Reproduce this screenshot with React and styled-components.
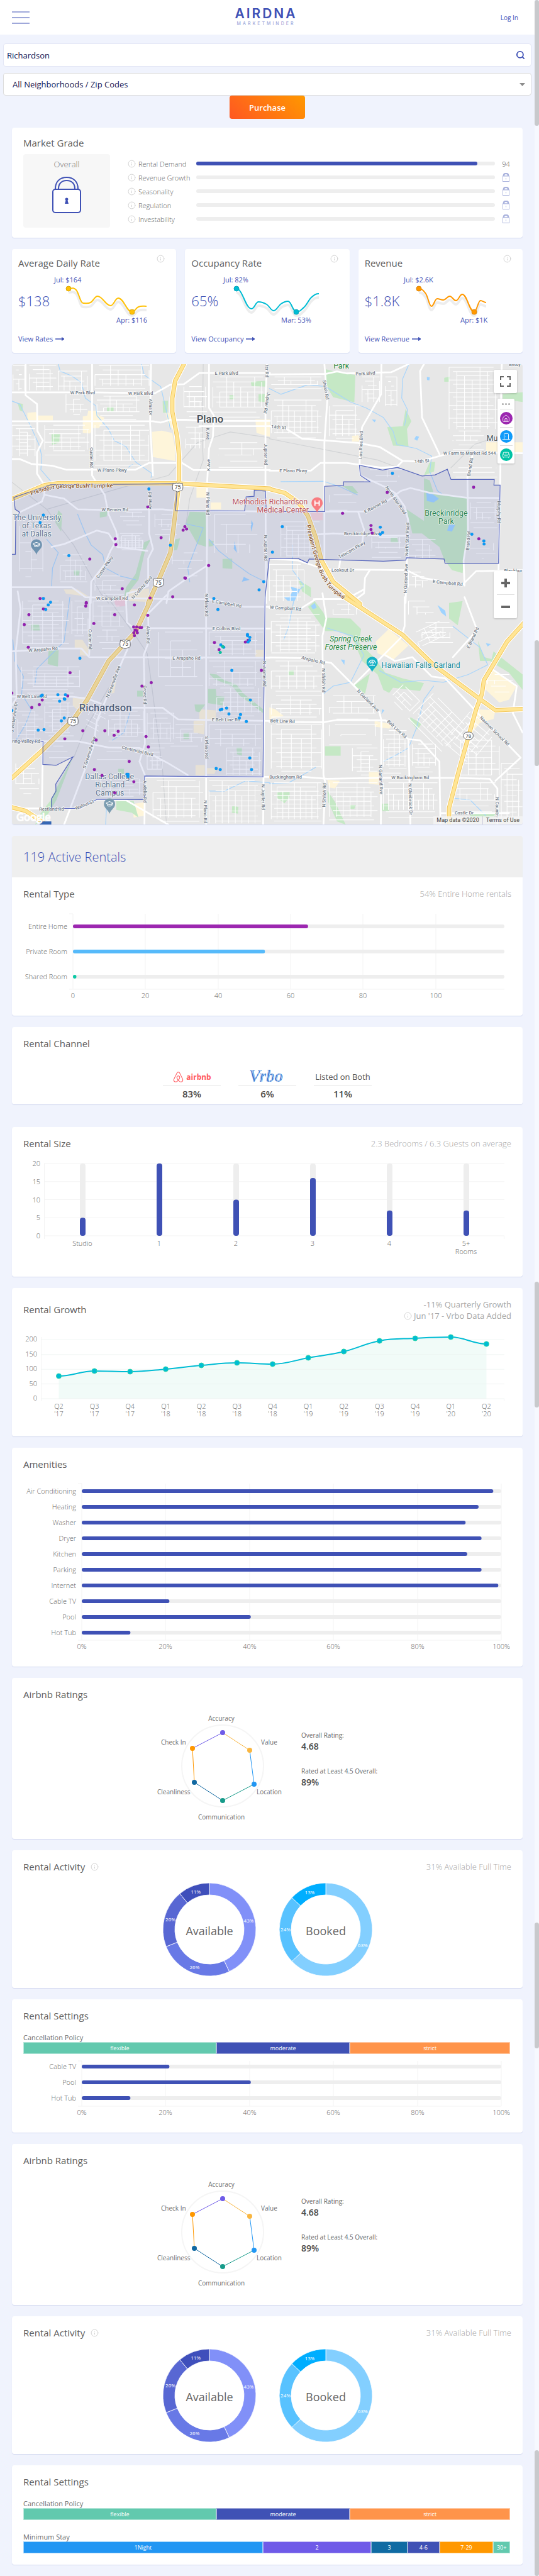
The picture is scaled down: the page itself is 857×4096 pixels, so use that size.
import React from "react";
import styled, { createGlobalStyle } from "styled-components";
import { Info, Search, House, DoorClosed, Sofa, GraduationCap, Plus, Minus } from "lucide-react";
import { FaAirbnb } from "react-icons/fa";

const indigo = "#3f51b5";
const track = "#eeeeee";
const gridLine = "#f3f3f3";

const GlobalStyle = createGlobalStyle`
  * { box-sizing: border-box; }
  body { margin: 0; background: #f0f3fd; font-family: "Open Sans", "Noto Sans", sans-serif; color: #555; }
  button, input, select { font-family: inherit; }
  h1, h2, p, dl, dd, dt { margin: 0; font-weight: 400; }
  svg { display: block; }
`;

const Page = styled.div`display: flex; align-items: stretch;`;
const Main = styled.div`flex: 1; min-width: 0; display: flex; flex-direction: column;`;
const Rail = styled.div`width: 7px; flex: none; display: flex; flex-direction: column; background: #f6f8fe;`;
const Thumb = styled.div`flex: 200 0 0; background: #c8c9cc; border-radius: 4px;`;
const RailGap = styled.div`flex: ${(p) => p.$grow} 0 0;`;

const TopBar = styled.header`
  height: 55px; background: #fff; padding: 0 26px 0 19px;
  display: grid; grid-template-columns: 1fr auto 1fr; align-items: center;
`;
const MenuButton = styled.button`
  width: 28px; height: 20px; padding: 0; border: 0; background: none;
  display: flex; flex-direction: column; justify-content: space-between;
  span { height: 2px; background: #9fa8da; }
`;
const Brand = styled.a`
  display: flex; flex-direction: column; align-items: center; text-decoration: none; font-family: Inter, sans-serif;
  strong { font-size: 21px; line-height: 20px; font-weight: 600; letter-spacing: 3px; color: ${indigo}; margin-right: -3px; }
  small { font-size: 7px; line-height: 11px; font-weight: 500; letter-spacing: 3px; color: #9fa8da; margin-right: -3px; }
`;
const LoginLink = styled.a`justify-self: end; font-size: 10px; font-weight: 400; color: ${indigo}; text-decoration: none;`;

const Filters = styled.form`padding: 14px 5px 0; display: flex; flex-direction: column; align-items: center;`;
const Field = styled.div`
  width: 100%; height: ${(p) => p.$h}px; margin-bottom: ${(p) => p.$gap}px; padding-right: 9px;
  display: flex; align-items: center; background: #fff; border: 1px solid ${(p) => p.$line}; border-radius: 4px;
  input, select {
    flex: 1; min-width: 0; height: 100%; border: 0; outline: 0; background: none; appearance: none;
    font-size: 13px; font-weight: 500; color: #13124f;
  }
  input { padding: 0 5px; }
  select { padding: 0 14px; }
`;
const IconButton = styled.button`border: 0; padding: 0; background: none; color: ${indigo}; display: flex;`;
const Purchase = styled.button`
  width: 120px; height: 37px; border: 0; border-radius: 4px; color: #fff; font-size: 13px; font-weight: 600;
  background: linear-gradient(45deg, #ff5722, #ff9800);
`;

const Content = styled.main`padding: 14px 19px 18px; display: flex; flex-direction: column; gap: 18px;`;
const Card = styled.section`
  background: #fff; border-radius: 4px; box-shadow: 0 1px 1px #d3d9f0;
  padding: ${(p) => p.$top ?? 15}px 18px ${(p) => p.$bottom ?? 0}px;
  margin-top: ${(p) => p.$apart ?? 0}px;
`;
const Head = styled.div`
  display: flex; justify-content: space-between; min-height: 22px;
  h2 { font-size: 15px; line-height: 22px; color: #5c5c5c; display: flex; align-items: center; gap: 9px; }
`;
const Note = styled.div`
  font-size: 13px; font-weight: 300; line-height: 18px; padding-top: 2px; color: #a6a6a6; text-align: right;
  p { display: flex; justify-content: flex-end; align-items: center; gap: 3px; }
`;
const InfoMark = styled(Info).attrs({ size: 13, strokeWidth: 1.5 })`color: #c6c6c6; flex: none;`;

const GradeBody = styled.div`display: flex; gap: 28px; margin-top: 7px;`;
const Overall = styled.div`
  width: 138px; height: 117px; flex: none; border-radius: 4px; background: #f7f7f7; padding-top: 7px;
  display: flex; flex-direction: column; align-items: center; gap: 11px;
  font-size: 13px; line-height: 18px; font-weight: 300; color: #777;
`;
const GradeList = styled.div`flex: 1; padding-top: 4px;`;
const GradeRow = styled.div`
  height: 22px; display: grid; grid-template-columns: 13px 88px 1fr 17px; column-gap: 4px; align-items: center;
  font-size: 11px; font-weight: 300; color: #666;
  > :last-child { justify-self: center; }
`;
const Bar = styled.div`
  height: 6px; border-radius: 3px; background: ${track}; margin-right: 5px;
  i { display: block; height: 6px; border-radius: 3px; background: ${indigo}; }
`;

const Stats = styled.div`display: grid; grid-template-columns: repeat(3, 1fr); gap: 14px;`;
const StatCard = styled.section`
  height: 165px; padding: 11px 10px; background: #fff; border-radius: 4px; box-shadow: 0 1px 1px #d3d9f0;
  h2 { font-size: 15px; line-height: 22px; color: #5c5c5c; }
`;
const StatTop = styled.div`display: flex; justify-content: space-between; align-items: flex-start; padding-right: 8px; svg { margin-top: -2px; }`;
const StatBody = styled.div`
  display: flex; height: 103px; padding-top: 7px;
  strong { width: 50px; flex: none; white-space: nowrap; font-size: 22px; line-height: 30px; padding-top: 27px; font-weight: 300; color: ${indigo}; }
  svg { flex: none; overflow: visible; }
  text { font-size: 11px; fill: ${indigo}; font-weight: 400; }
`;
const MoreLink = styled.a`display: flex; align-items: center; gap: 4px; font-size: 11px; line-height: 14px; color: ${indigo}; text-decoration: none;`;

const MapFrame = styled.section`position: relative; border-radius: 4px; overflow: hidden; box-shadow: 0 1px 1px #d3d9f0;`;
const MapArt = styled.svg`
  width: 100%; aspect-ratio: 812 / 732; font-family: Roboto, sans-serif;
  text { text-anchor: middle; dominant-baseline: central; paint-order: stroke; stroke: #ffffffcc; stroke-width: 5px; stroke-linejoin: round; }
`;
const MapPanel = styled.div`
  position: absolute; right: ${(p) => p.$right}px; top: ${(p) => p.$top}px; width: ${(p) => p.$w}px;
  background: #fff; border-radius: 2px; box-shadow: 0 1px 3px #0003;
  display: flex; flex-direction: column; align-items: center;
`;
const MapButton = styled.button`
  width: 37px; height: 37px; border: 0; padding: 0; background: none; color: #666;
  display: flex; align-items: center; justify-content: center;
`;
const Divider = styled.hr`width: ${(p) => p.$w}px; height: 1px; border: 0; margin: 0; background: #ddd;`;
const Dots = styled.div`height: 16px; display: flex; align-items: center; gap: 2px; i { width: 3px; height: 3px; border-radius: 50%; background: #aaa; }`;
const Kind = styled.button`
  width: 20px; height: 20px; margin: 4px 0; padding: 0; border: 0; border-radius: 50%; background: ${(p) => p.$color}; color: #fff;
  display: flex; align-items: center; justify-content: center;
`;
const Attribution = styled.div`
  position: absolute; right: 0; bottom: 0; height: 13px; padding: 0 5px; background: #f5f5f5cc;
  display: flex; align-items: center; gap: 5px; font: 9px/13px Roboto, sans-serif; color: #444;
  a { color: #444; text-decoration: none; border-left: 1px solid #ccd; padding-left: 5px; }
`;

const Banner = styled.div`
  margin: -15px -18px 15px; height: 66px; padding: 0 18px; background: #efefef; border-radius: 4px 4px 0 0;
  display: flex; align-items: center;
  h1 { font-size: 20px; font-weight: 300; color: ${indigo}; }
`;
const Chart = styled.svg`
  width: 100%; overflow: visible;
  text { font-size: 11px; font-weight: 300; fill: #666; }
`;

const Channels = styled.div`display: flex; justify-content: center; gap: 28px; padding-top: 28px;`;
const Channel = styled.div`
  width: 92px; text-align: center;
  strong { display: block; font-size: 15px; line-height: 25px; font-weight: 600; color: #4a4a4a; }
`;
const ChannelName = styled.div`
  height: 29px; border-bottom: 1px solid #e6e6e6; display: flex; align-items: center; justify-content: center; gap: 3px;
  font-size: ${(p) => (p.$brand ? 12 : 13)}px; font-weight: ${(p) => (p.$brand ? 700 : 400)}; color: ${(p) => (p.$brand ? "#ff5a5f" : "#555")};
  white-space: nowrap;
`;

const Centered = styled.div`display: flex; justify-content: center; gap: ${(p) => p.$gap}px; padding-top: ${(p) => p.$top ?? 0}px;`;
const Radar = styled.svg`text { font-size: 10px; fill: #6b6b6b; } line { stroke-width: 1px; }`;
const Scores = styled.dl`
  width: 122px; padding-top: 46px; white-space: nowrap;
  dt { font-size: 10px; line-height: 16px; color: #666; }
  dd { font-size: 14px; line-height: 20px; font-weight: 600; color: #4a4a4a; margin-bottom: 21px; }
`;
const Donut = styled.svg`
  text { text-anchor: middle; fill: #fff; font-size: 8px; }
  text:last-child { font-size: 18px; fill: #666; }
`;

const SettingLabel = styled.p`margin-top: ${(p) => p.$top}px; font-size: 11px; line-height: 15px; color: #6b6b6b;`;
const Segments = styled.div`display: flex; height: 19px; margin-right: 2px;`;
const Segment = styled.div`
  flex: ${(p) => p.$size} 0 0; min-width: 0; background: ${(p) => p.$color}; border: 1px solid #ffffff88; background-clip: border-box;
  font-size: 9px; line-height: 17px; color: #fff; text-align: center; white-space: nowrap;
`;

/* smooth curve with horizontal control handles */
const curve = (pts, t = 0.4) =>
  pts.map(([x, y], i) => {
    if (!i) return `M${x} ${y}`;
    const [a, b] = pts[i - 1];
    const p0 = pts[i - 2] || pts[i - 1];
    const p3 = pts[i + 1] || pts[i];
    const turnA = (b - p0[1]) * (y - b) <= 0;
    const turnB = (y - b) * (p3[1] - y) <= 0;
    const s1 = turnA ? 0 : (y - p0[1]) / (x - p0[0] || 1);
    const s2 = turnB ? 0 : (p3[1] - b) / (p3[0] - a || 1);
    const h = (x - a) * t;
    return `C${a + h} ${b + s1 * h} ${x - h} ${y - s2 * h} ${x} ${y}`;
  }).join("");

const Lock = ({ w, h, color, line, face }) => (
  <svg width={w} height={h} viewBox="0 0 46 58" fill="none" stroke={color} strokeWidth={line}>
    <path d="M5 21V19C5 8 12 1 23 1s18 7 18 18v2M10 21v-2C10 11 15 6 23 6s13 5 13 13v2" />
    <rect x="1" y="20" width="44" height="37" rx="4" fill={face} />
    <path d="M20.500 36a2.500 2.500 0 1 1 5 0l-1 2 1.500 5h-6l1.500-5z" fill={color} stroke="none" />
  </svg>
);

const grades = ["Rental Demand", "Revenue Growth", "Seasonality", "Regulation", "Investability"];

const stats = [
  { title: "Average Daily Rate", value: "$138", link: "View Rates", color: "#ffc107", edge: "#dba90c", hi: "Jul: $164", hx: 7, lo: "Apr: $116", lx: 106, low: 7,
    pts: [[30, 23], [42, 25], [53, 46], [65, 45], [76, 35], [97, 50], [109, 38], [131, 60], [141, 52], [154, 51]] },
  { title: "Occupancy Rate", value: "65%", link: "View Occupancy", color: "#00bcd4", edge: "#0aa5ba", hi: "Jul: 82%", hx: 1, lo: "Mar: 53%", lx: 93, low: 7,
    pts: [[22, 23], [46, 55], [57, 44], [70, 48], [81, 58], [93, 47], [104, 43], [117, 60], [130, 52], [141, 37], [153, 31]] },
  { title: "Revenue", value: "$1.8K", link: "View Revenue", color: "#ff9800", edge: "#dd860a", hi: "Jul: $2.6K", hx: 12, lo: "Apr: $1K", lx: 102, low: 8,
    pts: [[36, 23], [47, 31], [56, 51], [65, 39], [75, 41], [85, 35], [95, 42], [105, 32], [124, 60], [134, 42], [143, 45]] },
];

const Stat = ({ s }) => (
  <StatCard>
    <StatTop><h2>{s.title}</h2><InfoMark /></StatTop>
    <StatBody>
      <strong>{s.value}</strong>
      <svg width="165" height="84" viewBox="0 0 165 84">
        <path d={curve(s.pts)} fill="none" stroke="#000" strokeOpacity=".07" strokeWidth="4" transform="translate(0 6)" />
        <path d={curve(s.pts)} fill="none" stroke={s.color} strokeWidth="2" />
        {[s.pts[0], s.pts[s.low]].map(([x, y]) => <circle key={x} cx={x} cy={y} r="4" fill={s.color} stroke={s.edge} />)}
        <text x={s.hx} y="13">{s.hi}</text>
        <text x={s.lx} y="77">{s.lo}</text>
      </svg>
    </StatBody>
    <MoreLink href="#details">{s.link}
      <svg width="15" height="8" viewBox="0 0 15 8" fill="none" stroke={indigo}><path d="M0 4h13" strokeWidth="1.500" /><path d="M10.500 1.500 14 4l-3.500 2.500z" fill={indigo} /></svg>
    </MoreLink>
  </StatCard>
);

/* map data: each quadrant has its own origin */
const A = [-60, -24], B = [1332, -24], C = [-60, 1206], D = [1332, 1206];
const at = ([ox, oy], s) => s.trim().split(" ").map((p) => p.split(",").map(Number)).map(([x, y]) => [x + ox, y + oy]);
const line = (q, s) => at(q, s).map((p) => p.join(",")).join(" ");

const roads = [
  [A, "131,24 131,185 190,230 192,370 220,420 190,480 190,590 228,650 228,700 215,735 100,790"],
  [A, "60,170 480,170 800,175 880,130 950,128 1030,70 1395,70"], [A, "60,320 790,320 830,326 880,312 960,312 1080,318 1395,318"],
  [A, "1030,345 1395,345"], [A, "475,24 475,600 500,640 540,700 560,800 600,890 605,930 570,990 540,1060 470,1150 468,1260"],
  [A, "780,24 775,330 790,600"], [A, "770,690 770,900 790,980 765,1030 765,1170 700,1200 655,1210 650,1260"],
  [A, "60,515 100,515 160,540 270,550 340,570 700,570 770,535 940,535 1000,572 1395,572"],
  [A, "228,700 330,720 400,775 520,778 840,775 907,782 1395,787"], [A, "1080,24 1080,250 1105,290 1100,400 1080,460 1070,640 1068,1260"],
  [A, "1380,24 1372,200 1372,650 1375,1260"], [A, "60,1178 370,1178 440,1230 650,1235 870,1240 1080,1240 1150,1258"],
  [A, "265,970 330,955 500,885 560,900 605,970 760,990"], [A, "860,1260 870,1200 970,1130 1065,1070"],
  [B, "0,77 290,75 350,62 400,72 630,66 720,24"], [B, "285,24 300,210 285,430 285,1085"], [B, "580,24 578,180 480,350 470,430 467,547 471,600 600,660 650,690 700,760 718,830 712,1035 705,1260"],
  [B, "0,345 90,360 170,410 460,432 570,452 690,525 780,528 950,480 1310,485"], [B, "0,575 215,575 265,535 400,535 580,560 660,555 690,525"],
  [B, "800,24 780,60 790,300 880,490"], [B, "0,787 490,787 600,740 680,680 730,665 830,690 1020,715 1190,717"],
  [B, "1050,500 1025,600 1028,900 1005,1040 1010,1170"], [B, "1203,24 1200,100 1195,620 1186,1090"],
  [B, "255,905 330,900 580,912 725,912"], [B, "460,790 490,880 480,950 370,1010 360,1090"],
  [B, "0,1030 150,1040 285,1085 710,1090 790,1130 1000,1165 1070,1095 1310,1090"], [B, "520,1090 495,1130 490,1210 450,1240 230,1240"],
  [C, "90,-30 105,60 80,280 85,520 60,560"], [C, "60,280 150,275 240,265 420,265 460,310 1395,313"], [C, "60,515 370,515 450,525 520,550"],
  [C, "680,572 840,572 920,632 1395,640"], [C, "60,745 400,745 560,778 720,780 870,860 970,920"], [C, "650,0 655,130 690,160 1395,162"],
  [C, "860,-10 720,130 640,310 550,520 500,640 480,780 330,1177"], [C, "765,90 768,230 742,300 745,420 748,760 720,850 748,920 746,1177"],
  [C, "1065,0 1065,1177"], [C, "1370,0 1360,1177"], [C, "465,0 460,300"], [C, "870,1177 650,1050 500,1046 414,1093 60,1093"], [C, "221,745 215,1093"],
  [C, "1080,10 1260,50 1395,50"], [C, "750,930 1395,930"],
  [D, "275,-20 295,110 275,200 280,920 290,960 280,1177"], [D, "0,55 160,60 240,10 400,8 490,-40"], [D, "0,312 170,315 320,340 435,455 570,595 580,640 577,1177"],
  [D, "435,455 680,210 700,150 700,0"], [D, "0,645 280,647 350,635 600,637 720,735 780,740 880,850 885,1177"], [D, "720,735 730,1177"],
  [D, "0,930 180,930 300,940 560,935 970,935 1140,940 1180,990 1180,1177"], [D, "600,300 650,330 740,310 840,410 910,420 1060,580 1300,830 1170,950"],
  [D, "1010,0 1075,170 950,310"], [D, "1150,370 1280,460 1260,600 1310,700"], [D, "885,1117 1240,1117"],
];
const highways = [
  [A, "950,24 905,110 890,200 890,270 915,400 925,500 925,640 905,800 880,1000 820,1140 765,1260"],
  [C, "778,15 700,180 560,330 450,530 380,630 220,790 60,935"],
  [A, "60,722 230,650 300,640 900,640 1395,668"], [B, "0,670 80,690 150,740 200,810 240,920 270,1040 330,1150 470,1265"],
  [D, "390,0 690,195 850,350 1080,520 1170,585 1320,578"], [D, "1320,130 1230,230 1110,430 1100,500 1070,580 980,900 930,1090 930,1180"],
  [C, "50,1085 130,1105 240,1177"],
];
const parks = [
  [A, "265,385 308,383 305,430 268,442"], [A, "552,245 586,245 586,270 552,270"], [A, "840,215 868,213 865,275 842,275"], [A, "90,225 117,230 115,270 100,262"],
  [A, "1296,115 1370,110 1375,140 1300,138"], [A, "1336,180 1372,178 1372,220 1336,218"], [A, "1186,184 1210,184 1210,206 1186,206"],
  [A, "980,788 1062,790 1068,970 1020,955 960,850"], [A, "745,945 778,932 750,985 715,1140 640,1235 650,1180 700,1110"], [A, "1150,1032 1200,1030 1200,1083 1150,1080"],
  [A, "300,780 320,800 315,890 285,845"], [A, "515,790 555,785 550,812 515,818"], [A, "380,1088 411,1088 408,1117 384,1117"], [A, "905,930 930,925 915,985 892,990"], [A, "1078,936 1104,938 1100,965 1078,968"],
  [B, "290,50 350,65 445,80 440,222 400,212 330,195 290,130"], [B, "705,255 735,320 712,360 720,450 640,445 610,350 690,345"], [B, "905,95 935,88 930,115 905,115"],
  [B, "800,615 830,625 850,690 1025,712 1024,905 1005,1050 1000,1105 945,1090 905,1035 880,970 790,900 740,900 710,775 800,835"],
  [B, "830,530 858,530 852,580 800,600"], [B, "380,655 430,655 460,690 440,695"], [B, "1208,178 1311,170 1311,220 1208,205"], [B, "628,922 660,920 668,948 628,948"], [B, "150,1140 215,1180 215,1230 170,1200"],
  [C, "250,278 302,275 298,360 245,345"], [C, "160,140 200,138 205,172 162,172"], [C, "1075,475 1115,475 1118,512 1160,515 1150,560 1075,548"], [C, "708,484 738,484 738,514 708,514"],
  [C, "1080,395 1120,400 1160,430 1220,450 1260,500 1360,580 1360,600 1240,510 1200,460 1110,425"], [C, "948,702 976,700 976,734 948,734"], [C, "610,888 640,888 640,915 610,915"],
  [C, "1005,555 1060,555 1030,595 1010,590"], [C, "376,826 290,990 265,1045 200,1130 180,1177 230,1150 290,1050"], [C, "600,1055 690,1055 715,1140 680,1115 600,1100"], [C, "1222,778 1250,778 1250,820 1225,812"], [C, "1200,1080 1232,1085 1230,1120 1198,1115"],
  [D, "200,50 235,20 280,80 290,105 340,108 420,110 475,165 465,235 540,310 600,390 690,420 800,445 780,485 640,468 620,495 590,480 560,400 480,330 430,210 360,175 290,175"],
  [D, "440,455 520,395 495,500"], [D, "930,30 1000,20 975,145 930,110"], [D, "288,771 369,771 369,820 288,820"], [D, "97,380 126,378 126,402 97,402"], [D, "38,1010 105,1008 105,1036 78,1066 38,1036"],
  [D, "583,1068 620,1068 620,1106 583,1106"], [D, "730,620 788,655 765,685 728,636"], [D, "300,1000 340,1060 395,1177 350,1160 305,1060"], [D, "1080,225 1110,310 1150,320 1160,280 1311,400 1311,480 1240,390 1140,330 1090,330"], [D, "1040,1120 1170,1118 1170,1140 1040,1140"], [D, "418,1075 448,1075 440,1095 418,1095"],
];
const shops = [
  [A, "140,275 185,272 190,290 272,290 272,315 140,315"], [A, "455,265 500,265 510,290 538,300 535,320 510,355 480,355 465,383 427,380 427,295 450,290"],
  [A, "785,375 835,368 890,380 905,460 905,525 790,505"], [A, "855,275 885,275 900,370 870,340"], [A, "1320,310 1395,310 1395,400 1326,380"], [A, "1015,660 1066,660 1066,715 1015,715"], [A, "1088,740 1142,740 1142,775 1088,775"],
  [A, "665,1190 770,1185 770,1255 665,1250"], [A, "328,1190 400,1190 460,1228 340,1212"], [B, "1122,428 1311,428 1311,480 1122,480"], [B, "428,395 462,392 466,425 428,425"],
  [C, "385,220 425,220 455,265 455,305 412,300 412,262 385,262"], [C, "375,520 440,515 440,560 395,580 375,560"], [C, "1030,580 1115,585 1115,640 1060,640 1055,710 1000,700 1000,640 1030,635"], [C, "1010,868 1058,868 1058,920 1010,920"],
  [C, "1068,884 1120,884 1108,915 1068,915"], [C, "685,1070 748,1060 748,1130 690,1140"], [C, "1320,272 1365,272 1365,310 1320,310"], [C, "575,440 598,440 590,495 575,498"],
  [D, "550,230 618,165 720,250 640,325 560,290"], [D, "1140,370 1280,460 1240,530 1190,545 1110,470"], [D, "0,570 30,580 75,615 0,630"], [D, "545,640 645,660 620,680 545,670"], [D, "515,905 565,905 565,970 515,965"], [D, "300,945 365,950 340,990 310,985"], [D, "1070,580 1170,585 1160,630 1090,650 1040,710"],
];
const creeks = [
  [A, "300,24 310,60 370,85 420,120 440,200 495,240 500,290 560,360 590,420 650,450 700,530 785,590 780,610"], [A, "60,215 100,230 150,330 200,440 215,500 210,570 270,640"],
  [A, "730,24 745,80 830,140 865,290 880,360"], [A, "400,800 440,900 470,960 530,1010 545,1080 620,1120 700,1140"], [A, "265,1180 270,1080 300,1000 240,930"], [A, "1080,930 1130,990 1220,1060 1290,1110 1370,1150"], [A, "960,850 1050,870 1000,1000 970,1080 980,1150"],
  [B, "0,150 60,180 200,130 290,140 420,220 500,250 590,300 640,370 660,440 760,460 840,500 830,580 870,680 900,700"], [B, "720,30 690,100 685,200 715,260 700,340"], [B, "60,632 280,630 370,660 455,700"], [B, "120,960 120,1090 180,1170 120,1220"],
  [C, "65,220 75,330 120,410 110,500 160,580 130,660 75,750"], [C, "180,450 190,370 330,230 360,0"], [C, "670,600 640,700 580,740"], [C, "1080,1003 1160,1003 1270,950 1395,960"], [C, "550,1080 545,1177"],
  [D, "130,0 100,150 75,220"], [D, "280,500 330,460 420,440 460,360 490,300 430,200 300,160"], [D, "570,380 680,440 800,430 900,440 1030,400 1130,350 1090,260 950,150"], [D, "590,850 650,820 720,780 760,680 800,530 850,460"], [D, "955,1040 1040,1050 1120,1130"], [D, "0,965 100,960 190,910 240,880"],
];
const water = [
  [A, "690,540 660,562 670,548"], [A, "1300,830 1308,850 1300,890 1296,870"], [A, "1212,940 1225,1000 1208,980"], [A, "1260,1125 1290,1140 1250,1150"],
  [B, "815,90 830,92 828,108 816,106"], [B, "812,680 850,700 878,720 850,740 815,732"], [B, "760,395 775,400 765,420 750,412"], [B, "530,310 552,312 545,325"], [B, "930,855 962,855 945,890 920,885"], [B, "110,1175 160,1190 130,1250 100,1235 120,1200"],
  [D, "75,0 120,0 130,20 95,18"], [D, "215,45 235,30 245,55 225,62"], [D, "370,322 390,325 388,350"], [D, "1120,238 1146,242 1130,255"], [D, "585,580 595,585 580,605"], [D, "870,40 910,70 915,100 890,80"],
];
const rails = [
  [A, "60,635 240,775 380,960 520,1210 560,1260"], [A, "240,775 640,660 870,600 1020,430 1190,375 1395,405"], [A, "1050,24 1045,420 1050,520 980,720 960,860"], [B, "0,410 100,430 330,475 560,520 680,565"], [B, "940,560 1060,440 1150,410"],
  [C, "540,-20 700,200 760,290 780,430 840,900 860,1177"], [C, "560,470 440,680 380,830"],
];
const blocks = [
  [A, 66, 30, 60, 130, 30, 24], [A, 150, 30, 140, 130, 36, 22], [A, 300, 60, 150, 100, 30, 26], [A, 490, 30, 280, 130, 40, 24], [A, 500, 190, 220, 120, 34, 20], [A, 60, 340, 120, 160, 40, 18], [A, 230, 340, 230, 170, 44, 22], [A, 490, 340, 280, 210, 46, 26], [A, 340, 180, 110, 120, 38, 26], [A, 950, 140, 120, 160, 28, 26],
  [A, 1100, 90, 260, 210, 36, 26], [A, 960, 350, 100, 110, 24, 30], [A, 1130, 430, 230, 130, 60, 32], [A, 310, 1010, 140, 160, 26, 28], [A, 610, 900, 130, 90, 18, 12], [A, 800, 800, 130, 120, 34, 26], [A, 890, 1000, 160, 140, 60, 40], [A, 1110, 800, 220, 200, 60, 52], [A, 490, 1120, 150, 100, 40, 24], [A, 100, 860, 120, 280, 60, 44], [A, 620, 790, 130, 70, 32, 22],
  [B, 10, 90, 260, 60, 34, 20], [B, 10, 210, 260, 200, 30, 28], [B, 310, 240, 160, 180, 34, 24], [B, 480, 90, 90, 130, 30, 22], [B, 600, 90, 60, 150, 30, 24], [B, 930, 40, 250, 320, 40, 22], [B, 950, 370, 160, 100, 30, 24], [B, 310, 700, 140, 80, 46, 40], [B, 60, 840, 200, 180, 30, 22], [B, 530, 920, 170, 110, 36, 26], [B, 720, 930, 140, 100, 36, 28], [B, 1040, 740, 140, 140, 32, 26], [B, 1040, 950, 130, 90, 60, 26], [B, 0, 1060, 180, 190, 36, 28], [B, 720, 1100, 100, 80, 36, 22], [B, 950, 560, 230, 50, 28, 24], [B, 490, 570, 200, 70, 60, 30],
  [C, 115, 20, 240, 240, 52, 20], [C, 370, 20, 90, 200, 28, 30], [C, 480, 20, 160, 130, 46, 26], [C, 110, 360, 300, 140, 60, 17], [C, 230, 530, 150, 200, 40, 17], [C, 90, 590, 130, 140, 44, 20], [C, 820, 180, 230, 280, 62, 46], [C, 1080, 180, 280, 120, 60, 22], [C, 1080, 330, 270, 130, 40, 30], [C, 560, 590, 180, 170, 30, 22], [C, 760, 600, 140, 160, 34, 26], [C, 880, 660, 170, 110, 54, 22], [C, 1120, 470, 230, 150, 36, 24], [C, 1080, 660, 270, 110, 60, 24], [C, 1170, 780, 180, 140, 34, 22], [C, 760, 780, 90, 130, 26, 22], [C, 520, 940, 220, 100, 50, 18], [C, 500, 170, 130, 120, 26, 32], [C, 790, 950, 260, 220, 40, 30], [C, 1080, 950, 270, 220, 34, 26], [C, 230, 770, 140, 60, 44, 30], [C, 80, 860, 120, 160, 40, 26], [C, 500, 800, 180, 40, 50, 40],
  [D, 10, 90, 250, 210, 46, 18], [D, 10, 330, 260, 170, 44, 26], [D, 310, 510, 240, 120, 38, 30], [D, 10, 510, 260, 120, 50, 22], [D, 10, 660, 260, 250, 52, 24], [D, 310, 660, 250, 110, 60, 52], [D, 430, 780, 130, 140, 44, 20], [D, 590, 690, 120, 230, 28, 22], [D, 740, 760, 120, 160, 30, 24], [D, 590, 960, 280, 200, 26, 30], [D, 310, 960, 250, 200, 36, 24], [D, 10, 960, 260, 210, 30, 22], [D, 990, 740, 200, 180, 40, 30], [D, 950, 960, 220, 150, 36, 30], [D, 1200, 860, 110, 300, 30, 28], [D, 1130, 400, 130, 110, 36, 30], [D, 330, 10, 130, 80, 40, 26], [D, 790, 130, 160, 110, 36, 26], [D, 720, 20, 130, 70, 44, 30],
];
const tilted = [[D, 740, 560, 260, 200, 34, 26, 45], [D, 950, 620, 170, 220, 34, 30, 40], [D, 640, 480, 120, 100, 30, 24, 45], [C, 455, 560, 90, 120, 30, 24, 28], [D, 760, 150, 150, 100, 30, 26, -25]];
const grid = ([q, x, y, w, h, dx, dy]) => {
  let d = "";
  for (let j = 0; j * dy <= h; j++) {
    const a = ((j * 7 + x) % 3) * dx * 0.5, b = ((j * 5 + y) % 3) * dx * 0.5;
    d += `M${x + q[0] + a} ${y + q[1] + j * dy}H${x + q[0] + w - b}`;
  }
  for (let i = 0; i * dx <= w; i++) {
    const a = ((i * 5 + y) % 4) * dy, b = ((i * 3 + x) % 3) * dy;
    if (a + b < h) d += `M${x + q[0] + i * dx} ${y + q[1] + a}V${y + q[1] + h - b}`;
  }
  return d;
};
const boundary = [
  line(A, "60,1008 78,1008 80,822 100,790 77,775 70,714 260,648 640,645 917,643 907,782 1264,783 1272,711 1313,708 1314,676 1372,681 1376,787"),
  line(B, "286,787 286,656 384,652 384,633 520,632 471,600 466,547 586,572 663,558 790,603 858,597 921,568 940,621 1164,621 1162,650 1194,650 1186,1055 909,1054 904,1032 710,1026 706,1038 590,1044 206,1032 197,1052 150,1030 0,1028"),
  line(C, "1370,0 1359,930 747,925 746,1047 500,1046 414,1093 264,1093 264,1045 288,1004 287,967 376,826 289,870 220,865 221,745 60,745"),
].join(" ");
const labels = [
  [A, 426, 172, 0, "W Park Blvd"], [A, 726, 174, 0, "W Park Blvd"], [A, 1170, 71, 0, "E Park Blvd"], [A, 778, 247, 90, "Alma Dr"], [A, 473, 507, 90, "Custer Rd"], [A, 578, 573, 0, "W Plano Pkwy"], [A, 1075, 384, 90, "K Ave"], [A, 1077, 546, -90, "K Ave"], [A, 1373, 490, 90, "Jupiter Rd"], [A, 1380, 60, 90, "ter Rd"], [A, 1380, 225, 100, "Jupiter Rd"],
  [A, 593, 776, 0, "W Renner Rd"], [A, 774, 730, -90, "Alma Rd"], [A, 1073, 746, 90, "N Plano Rd"], [A, 540, 1075, -55, "Custer Pkwy"], [A, 732, 1180, -48, "N Collins Blvd"], [A, 1373, 975, 90, "N Jupiter Rd"], [A, 578, 1235, 0, "W Campbell Rd"],
  [B, 497, 72, -3, "Park Blvd"], [B, 292, 157, 80, "Shiloh Rd"], [B, 48, 350, 4, "14th St"], [B, 474, 442, -88, "Los Rios Blvd"], [B, 789, 526, -4, "14th St"], [B, 1036, 484, 0, "W Farm to Market Rd 544"], [B, 124, 577, 0, "E Plano Pkwy"], [B, 1039, 556, -80, "Brand Rd"], [B, 655, 728, 55, "North Star Road"], [B, 550, 760, -28, "E Renner Rd"], [B, 480, 902, 0, "Breckinridge Blvd"], [B, 427, 985, -30, "Telecom Pkwy"], [B, 713, 930, -88, "North Star Road"], [B, 1029, 938, -86, "Brand Rd"], [B, 1190, 790, 90, "Murphy Rd"], [B, 380, 1090, 0, "Lookout Dr"], [B, 706, 1134, -88, "N Garland Ave"], [B, 923, 1156, 6, "E Campbell Rd"], [B, 1262, 1094, 0, "Blackbur"], [B, 1270, 26, 0, "Betsy"],
  [C, 1172, 33, 10, "E Campbell Rd"], [C, 1066, 40, 90, "N Plano Rd"], [C, 1170, 163, 0, "E Collins Blvd"], [C, 464, 218, 90, "Custer Rd"], [C, 766, 194, 90, "Alma Rd"], [C, 221, 270, -5, "W Arapaho Rd"], [C, 963, 314, 0, "E Arapaho Rd"], [C, 585, 437, -70, "N Greenville Ave"], [C, 163, 514, 0, "W Belt Line Rd"], [C, 748, 505, 90, "Grove Rd"], [C, 1366, 396, 90, "N Jupiter Rd"], [C, 1168, 633, 0, "E Belt Line Rd"], [C, 71, 620, -82, "S Waterview Dr"], [C, 134, 744, 0, "ring Valley Rd"], [C, 461, 803, -72, "S Greenville Ave"], [C, 710, 795, 14, "Centennial Blvd"], [C, 1066, 777, 90, "S Plano Rd"], [C, 750, 1005, 90, "Audelia Rd"], [C, 265, 1095, 0, "Restland Rd"], [C, 436, 1074, -22, "Walnut St"], [C, 1061, 1110, 90, "N Plano Rd"], [C, 1359, 1034, 90, "N Jupiter Rd"],
  [D, 84, 57, 4, "W Campbell Rd"], [D, 227, 326, 14, "Arapaho Rd"], [D, 281, 430, 90, "N Shiloh Rd"], [D, 1053, 210, -64, "E Brand Rd"], [D, 511, 535, 45, "N Garland Ave"], [D, 68, 641, 2, "Belt Line Rd"], [D, 660, 682, 42, "Belt Line Rd"], [D, 1165, 692, 45, "Naaman School Rd"], [D, 84, 929, 0, "Buckingham Rd"], [D, 729, 934, 0, "W Buckingham Rd"], [D, 577, 943, 88, "N Garland Ave"], [D, 284, 1024, -88, "N Shiloh Rd"], [D, 730, 1045, 88, "N Glenbrook Dr"], [D, 1008, 1117, 0, "Castle Dr"], [D, 1180, 1088, 90, "N Country"],
];
const places = [
  [A, 1085, 310, "Plano", 54, "#454c54", 500], [C, 544, 571, "Richardson", 54, "#50607c", 500], [B, 1153, 408, "Mu", 40, "#454c54", 400], [B, 372, 34, "Park", 40, "#1e8540", 400],
  [A, 190, 817, "The University", 40, "#5d7590", 400], [A, 188, 859, "of Texas", 40, "#5d7590", 400], [A, 188, 901, "at Dallas", 40, "#5d7590", 400],
  [C, 565, 928, "Dallas College", 40, "#5d7590", 400], [C, 567, 970, "Richland", 40, "#5d7590", 400], [C, 567, 1012, "Campus", 40, "#5d7590", 400],
  [A, 1396, 736, "Methodist Richardson", 40, "#b85560", 400], [A, 1462, 778, "Medical Center", 40, "#b85560", 400],
  [B, 915, 796, "Breckinridge", 40, "#2c8452", 400], [B, 915, 838, "Park", 40, "#2c8452", 400], [D, 784, 352, "Hawaiian Falls Garland", 40, "#158796", 400],
];
const purpleDots = at(A, "763,763 955,865 964,877 946,883 832,922 595,928 598,958 463,1033 1078,1066 955,1130 958,1132 631,1186 775,1234 892,1228 206,1237 445,1258")
  .concat(at(B, "610,688 379,796 526,859 526,880 532,898 1057,661 1084,928"))
  .concat(at(C, "694,40 445,31 442,46 592,91 763,94 223,61 148,91 124,142 484,136 690,154 706,154 722,157 731,157 697,170 706,173 691,184 709,184 694,199 145,259 1108,235 1132,271 1268,232 1282,223 1351,379 361,391 781,442 733,460 349,511 217,532 202,556 163,571 427,691 541,691 610,694 589,715 334,733 496,739 754,721 766,775 667,850 487,892 526,922 691,955 592,1012 60,496"));
const blueDots = at(A, "769,670 223,805 206,844 880,961 355,1015 1363,1150 1339,1192 1105,1237 223,1237 260,1256")
  .concat(at(B, "637,589 574,868 586,895 574,904 67,865 16,997 1048,904 1110,939 1111,955"))
  .concat(at(C, "248,40 235,64 1126,64 412,316 1141,247 1156,259 1279,193 1279,199 1291,208 1289,223 1282,232 1198,379 217,506 211,511 298,505 337,505 331,526 334,528 307,538 331,625 316,640 60,586 226,685 196,688 1294,532 1171,574 1147,580 1138,583 1183,604 1243,607 1237,625 1273,643 1291,832 1117,886 1138,892 1300,892 655,916 661,928 661,916"));
const greenDots = at(C, "1138,286 1151,256");

const Shapes = ({ list, fill }) => list.map(([q, s], i) => <polygon key={i} points={line(q, s)} fill={fill} />);
const Lines = ({ list, color, width }) => (
  <g fill="none" stroke={color} strokeWidth={width} strokeLinejoin="round" strokeLinecap="round">
    {list.map(([q, s], i) => <polyline key={i} points={line(q, s)} />)}
  </g>
);
const Pin = ({ q, x, y, color, children }) => (
  <g transform={`translate(${x + q[0]} ${y + q[1]})`}>
    <path d="M0 50C-6 28-29 20-29-1a29 29 0 0 1 58 0C29 20 6 28 0 50z" fill={color} />
    {children}
  </g>
);
const Shield = ({ q, x, y, label }) => (
  <g transform={`translate(${x + q[0]} ${y + q[1]})`}>
    <path d="M-24-20q8 5 16-1 8 4 16 0 8 6 16 1 5 20 2 32-4 9-14 8L0 25l-12-5q-10 1-14-8-3-12 2-32z" fill="#fff" stroke="#5e6066" strokeWidth="3" />
    <text fontSize="28" fill="#333" strokeWidth="0" y="1">{label}</text>
  </g>
);

const CityMap = () => (
  <MapFrame aria-label="Map of Richardson">
    <MapArt viewBox="0 0 2643 2382" preserveAspectRatio="xMidYMid slice">
      <rect width="2643" height="2382" fill="#e7e7e7" />
      <Shapes list={shops} fill="#fef5da" />
      <Shapes list={parks} fill="#c5e8c5" />
      <polygon points={line(B, "212,790 276,790 276,832 220,832")} fill="#f8d7da" />
      <polygon points={line(C, "580,0 648,0 648,45 600,50")} fill="#f4d3dc" />
      <Lines list={rails} color="#d2d4d6" width="4" />
      <Lines list={creeks} color="#a9d5fb" width="4" />
      <Shapes list={water} fill="#9fd3ff" />
      <path d={blocks.map(grid).join("")} fill="none" stroke="#fff" strokeWidth="3.500" />
      {tilted.map((b, i) => (
        <path key={i} d={grid(b)} fill="none" stroke="#fff" strokeWidth="3.500" transform={`rotate(${b[7]} ${b[1] + b[0][0] + b[3] / 2} ${b[2] + b[0][1] + b[4] / 2})`} />
      ))}
      <Lines list={roads} color="#fff" width="9" />
      <Lines list={highways} color="#fff" width="30" />
      <Lines list={highways} color="#f3c657" width="22" />
      <Lines list={highways} color="#ffe595" width="16" />
      <polygon points={boundary} fill="#3f51b5" fillOpacity=".12" />
      <polyline points={boundary} fill="none" stroke="#3f51b5" strokeOpacity=".85" strokeWidth="4" />
      {labels.map(([q, x, y, r, t], i) => <text key={i} transform={`translate(${x + q[0]} ${y + q[1]}) rotate(${r})`} fontSize="24" fontWeight="500" fill="#707a86">{t}</text>)}
      {places.map(([q, x, y, t, size, fill, weight], i) => <text key={i} x={x + q[0]} y={y + q[1]} fontSize={size} fontWeight={weight} fill={fill}>{t}</text>)}
      <g fontSize="40" fill="#1e8540" fontStyle="italic">
        <text x="1754" y="1423">Spring Creek</text>
        <text x="1754" y="1465">Forest Preserve</text>
      </g>
      <g fontSize="30" fill="#86552e" fontWeight="500">
        <path id="pike-west" d="M62 682Q150 640 260 628L560 625" fill="none" />
        <text dominantBaseline="auto"><textPath href="#pike-west" startOffset="50%">President George Bush Turnpike</textPath></text>
        <path id="pike-east" d="M1530 800Q1560 950 1600 1060T1750 1220" fill="none" />
        <text><textPath href="#pike-east" startOffset="50%">President George Bush Turnpike</textPath></text>
      </g>
      <Shield q={A} x={918} y={660} label="75" />
      <Shield q={A} x={818} y={1154} label="75" />
      <Shield q={C} x={646} y={242} label="75" />
      <Shield q={C} x={376} y={641} label="75" />
      <g transform="translate(2362 1923)">
        <rect x="-25" y="-19" width="50" height="38" rx="19" fill="#fff" stroke="#5e6066" strokeWidth="3" />
        <text fontSize="26" fill="#333" strokeWidth="0" y="1">78</text>
      </g>
      <Pin q={A} x={187} y={960} color="#6f93b0"><GraduationCap x="-20" y="-22" width="40" height="40" color="#fff" /></Pin>
      <Pin q={C} x={565} y={1071} color="#7a9cb0"><GraduationCap x="-20" y="-22" width="40" height="40" color="#fff" /></Pin>
      <Pin q={B} x={247} y={743} color="#f87c80"><path d="M-11-14V14M11-14V14M-11 0H11" stroke="#fff" strokeWidth="6" /></Pin>
      <Pin q={D} x={532} y={338} color="#14b1c5"><path d="M-17 4a17 17 0 1 1 34 0M-9 6a9 9 0 1 1 18 0M0-14V16M-14 14h28" stroke="#fff" strokeWidth="4" fill="none" /></Pin>
      <g stroke="#0002" strokeWidth="1">
        {purpleDots.map(([x, y], i) => <circle key={i} cx={x} cy={y} r="8" fill="#9320b0" />)}
        {blueDots.map(([x, y], i) => <circle key={i} cx={x} cy={y} r="8" fill="#0a99f5" />)}
        {greenDots.map(([x, y], i) => <circle key={i} cx={x} cy={y} r="8" fill="#0cc2a0" />)}
      </g>
      <rect x="144" y="2366" width="60" height="20" fill="#3567b5" />
      <text x="112" y="2342" fontSize="54" fill="#fff" stroke="#8888" fontFamily="Open Sans" fontWeight="500">Google</text>
    </MapArt>
    <MapPanel $right={9} $top={9} $w={37}>
      <MapButton aria-label="Full screen">
        <svg width="17" height="17" viewBox="0 0 17 17" fill="none" stroke="#666" strokeWidth="2"><path d="M1 6V1h5M11 1h5v5M16 11v5h-5M6 16H1v-5" /></svg>
      </MapButton>
    </MapPanel>
    <MapPanel $right={13} $top={55} $w={27}>
      <Dots><i /><i /><i /></Dots><Divider $w={20} />
      <Kind $color="#9c27b0" aria-label="Entire home"><House size={13} strokeWidth={1.5} /></Kind><Divider $w={20} />
      <Kind $color="#0f9bfa" aria-label="Private room"><DoorClosed size={14} strokeWidth={1.5} /></Kind><Divider $w={20} />
      <Kind $color="#00c3a5" aria-label="Shared room"><Sofa size={13} strokeWidth={1.5} /></Kind>
    </MapPanel>
    <MapPanel $right={9} $top={329} $w={37}>
      <MapButton aria-label="Zoom in"><Plus size={24} strokeWidth={4} strokeLinecap="butt" /></MapButton>
      <Divider $w={28} />
      <MapButton aria-label="Zoom out"><Minus size={24} strokeWidth={4} strokeLinecap="butt" /></MapButton>
    </MapPanel>
    <Attribution><span>Map data ©2020</span><a href="#terms">Terms of Use</a></Attribution>
  </MapFrame>
);

const HBars = ({ height, left, right, top, bottom, first, step, rows, ticks, base }) => (
  <Chart viewBox={`0 0 776 ${height}`}>
    <g stroke={gridLine}>
      {ticks.map(([x]) => <line key={x} x1={x} x2={x} y1={top} y2={bottom} />)}
      <line x1={left - 6} x2={right} y1={bottom} y2={bottom} />
      <line x1={left - 6} x2={left} y1={top} y2={top} />
    </g>
    {rows.map(([label, share, color], i) => {
      const y = first + i * step;
      return (
        <g key={label}>
          <text x={left - 9} y={y + 4} textAnchor="end">{label}</text>
          <rect x={left} y={y - 3} width={right - left} height="6" rx="3" fill={track} />
          <rect x={left} y={y - 3} width={(right - left) * share} height="6" rx="3" fill={color || indigo} />
        </g>
      );
    })}
    {ticks.map(([x, label]) => <text key={x} x={x} y={base} textAnchor="middle">{label}</text>)}
  </Chart>
);
const percentTicks = [[93, "0%"], [226, "20%"], [360, "40%"], [493, "60%"], [627, "80%"], [760, "100%"]];
const amenities = [["Air Conditioning", 0.981], ["Heating", 0.946], ["Washer", 0.915], ["Dryer", 0.953], ["Kitchen", 0.919], ["Parking", 0.953], ["Internet", 0.993], ["Cable TV", 0.209], ["Pool", 0.403], ["Hot Tub", 0.116]];

const sizes = [["Studio", 5], ["1", 20], ["2", 10], ["3", 16], ["4", 7], ["5+", 7]];
const SizeChart = () => (
  <Chart viewBox="0 0 776 201">
    {[0, 5, 10, 15, 20].map((v) => (
      <g key={v}>
        <line x1="33" x2="765" y1={136 - v * 5.75} y2={136 - v * 5.75} stroke={gridLine} />
        <text x="27" y={140 - v * 5.75} textAnchor="end">{v}</text>
      </g>
    ))}
    <path d="M33.500 21V141M764.500 136v5" stroke={gridLine} />
    {sizes.map(([label, v], i) => {
      const x = 94 + i * 122;
      return (
        <g key={label}>
          <rect x={x - 4} y="21" width="9" height="115" rx="4" fill={track} />
          <rect x={x - 4} y={136 - v * 5.75} width="9" height={v * 5.75} rx="4" fill={indigo} />
          <text x={x} y="152" textAnchor="middle">{label}</text>
        </g>
      );
    })}
    <text x="704" y="165" textAnchor="middle">Rooms</text>
  </Chart>
);

const quarters = ["Q2 '17", "Q3 '17", "Q4 '17", "Q1 '18", "Q2 '18", "Q3 '18", "Q4 '18", "Q1 '19", "Q2 '19", "Q3 '19", "Q4 '19", "Q1 '20", "Q2 '20"];
const growth = [87, 79, 80, 76, 70, 66, 68, 58, 48, 31, 27, 25, 36].map((y, i) => [56.5 + i * 56.66, y]);
const GrowthChart = () => (
  <Chart viewBox="0 0 776 183">
    <path d={`${curve(growth)}V123H56.500z`} fill="#f1fbf8" />
    {[0, 50, 100, 150, 200].map((v, i) => (
      <g key={v}>
        <line x1="28" x2="765" y1={123 - i * 23.4} y2={123 - i * 23.4} stroke="#e9efee" strokeOpacity=".7" />
        <text x="22" y={126 - i * 23.4} textAnchor="end">{v}</text>
      </g>
    ))}
    <path d="M28.500 25V127M764.500 123v4" stroke={gridLine} />
    <path d={curve(growth)} fill="none" stroke="#00bcd4" strokeWidth="2" />
    {growth.map(([x, y], i) => (
      <g key={i}>
        <circle cx={x} cy={y} r="4" fill="#00bcd4" stroke="#2bd5a8" />
        <text x={x} y="139" textAnchor="middle">{quarters[i].slice(0, 2)}</text>
        <text x={x} y="151" textAnchor="middle">{quarters[i].slice(3)}</text>
      </g>
    ))}
  </Chart>
);

const axes = [[105, 50, "#6f5ce8"], [148, 78, "#f9b641"], [155, 132, "#2196f3"], [105, 158, "#179b8a"], [60, 129, "#1168a1"], [57, 75, "#ff9800"]];
const edges = ["#f9b641", "#2196f3", "#179b8a", "#1168a1", "#ff9800", "#6f5ce8"];
const Ratings = () => (
  <Card>
    <Head><h2>Airbnb Ratings</h2></Head>
    <Centered $gap={30}>
      <Radar width="200" height="219" viewBox="0 0 200 219">
        <circle cx="105" cy="103" r="65" fill="none" stroke="#f5f5f5" strokeWidth="2" />
        {axes.map(([x, y], i) => { const n = axes[(i + 1) % 6]; return <line key={i} x1={x} y1={y} x2={n[0]} y2={n[1]} stroke={edges[i]} />; })}
        {axes.map(([x, y, c], i) => <circle key={i} cx={x} cy={y} r="4" fill={c} />)}
        <text x="103" y="31" textAnchor="middle">Accuracy</text>
        <text x="166" y="69">Value</text>
        <text x="159" y="148">Location</text>
        <text x="103" y="188" textAnchor="middle">Communication</text>
        <text x="1" y="148">Cleanliness</text>
        <text x="7" y="69">Check In</text>
      </Radar>
      <Scores>
        <dt>Overall Rating:</dt><dd>4.68</dd>
        <dt>Rated at Least 4.5 Overall:</dt><dd>89%</dd>
      </Scores>
    </Centered>
  </Card>
);

const Ring = ({ parts, title }) => {
  let sum = 0;
  const p = (r, t) => [74 + r * Math.sin(t * 2 * Math.PI), 74 - r * Math.cos(t * 2 * Math.PI)];
  return (
    <Donut width="148" height="148" viewBox="0 0 148 148">
      {parts.map(([v, color]) => {
        const a = sum / 100, b = (sum += v) / 100, big = v > 50 ? 1 : 0;
        const m = p(64, (a + b) / 2);
        return (
          <g key={v}>
            <path d={`M${p(74, a)}A74 74 0 ${big} 1 ${p(74, b)}L${p(55, b)}A55 55 0 ${big} 0 ${p(55, a)}z`} fill={color} stroke="#fff" strokeOpacity=".8" />
            <text x={m[0]} y={m[1] + 3} fontSize="8">{v}%</text>
          </g>
        );
      })}
      <text x="74" y="83">{title}</text>
    </Donut>
  );
};
const RingLabelFix = styled.div`display: contents; g text:last-child { font-size: 8px; fill: #fff; }`;
const Activity = () => (
  <Card $bottom={19}>
    <Head><h2>Rental Activity <InfoMark /></h2><Note>31% Available Full Time</Note></Head>
    <RingLabelFix>
      <Centered $gap={37} $top={15}>
        <Ring title="Available" parts={[[43, "#8190f8"], [26, "#6879e6"], [20, "#5867d3"], [11, "#3f4fbb"]]} />
        <Ring title="Booked" parts={[[63, "#83cfff"], [24, "#58c2ff"], [13, "#00aeff"]]} />
      </Centered>
    </RingLabelFix>
  </Card>
);

const SplitBar = ({ label, top, parts }) => (
  <>
    <SettingLabel $top={top}>{label}</SettingLabel>
    <Segments>{parts.map(([t, size, color]) => <Segment key={t} $size={size} $color={color}>{t}</Segment>)}</Segments>
  </>
);
const policy = [["flexible", 562, "#62c9ae"], ["moderate", 388, indigo], ["strict", 466, "#ff944a"]];
const stay = [["1Night", 704, "#2196f3"], ["2", 317, "#6f5ae8"], ["3", 103, "#0f6ba3"], ["4-6", 91, indigo], ["7-29", 155, "#ff9800"], ["30+", 46, "#62c9ae"]];

export default function App() {
  return (
    <Page>
      <GlobalStyle />
      <Main>
        <TopBar>
          <MenuButton aria-label="Menu"><span /><span /><span /></MenuButton>
          <Brand href="#home"><strong>AIRDNA</strong><small>MARKETMINDER</small></Brand>
          <LoginLink href="#login">Log In</LoginLink>
        </TopBar>
        <Filters>
          <Field $h={37} $gap={10} $line="#e3e6f5">
            <input aria-label="City" defaultValue="Richardson" />
            <IconButton type="button" aria-label="Search"><Search size={15} strokeWidth={3} /></IconButton>
          </Field>
          <Field $h={36} $gap={0} $line="#dcdcdc">
            <select aria-label="Neighborhood"><option>All Neighborhoods / Zip Codes</option></select>
            <svg width="9" height="5" viewBox="0 0 9 5"><path d="M0 0h9L4.500 5z" fill="#8c8c8c" /></svg>
          </Field>
          <Purchase type="button">Purchase</Purchase>
        </Filters>
        <Content>
          <Card $top={13} $bottom={16}>
            <Head><h2>Market Grade</h2></Head>
            <GradeBody>
              <Overall>Overall<Lock w={46} h={58} color={indigo} line={2} face="#fff" /></Overall>
              <GradeList>
                {grades.map((g, i) => (
                  <GradeRow key={g}>
                    <InfoMark /><span>{g}</span>
                    <Bar>{i === 0 && <i style={{ width: "94%" }} />}</Bar>
                    {i === 0 ? <span>94</span> : <Lock w={11} h={14} color="#a9b2dd" line={5} face="none" />}
                  </GradeRow>
                ))}
              </GradeList>
            </GradeBody>
          </Card>
          <Stats>{stats.map((s) => <Stat key={s.title} s={s} />)}</Stats>
          <CityMap />
          <Card>
            <Banner><h1>119 Active Rentals</h1></Banner>
            <Head><h2>Rental Type</h2><Note>54% Entire Home rentals</Note></Head>
            <HBars height={183} left={79} right={765} top={21} bottom={141} first={41} step={40} base={155}
              ticks={[[79, "0"], [194, "20"], [310, "40"], [425, "60"], [540, "80"], [656, "100"]]}
              rows={[["Entire Home", 0.545, "#9c27b0"], ["Private Room", 0.445, "#56bafa"], ["Shared Room", 0.008, "#0cc9a5"]]} />
          </Card>
          <Card $bottom={4}>
            <Head><h2>Rental Channel</h2></Head>
            <Channels>
              <Channel><ChannelName $brand><FaAirbnb size={19} />airbnb</ChannelName><strong>83%</strong></Channel>
              <Channel>
                <ChannelName>
                  <svg width="60" height="24" viewBox="0 0 60 24">
                    <defs>
                      <pattern id="vrbo" width="4" height="4" patternUnits="userSpaceOnUse" patternTransform="rotate(-20)">
                        <rect width="4" height="4" fill="#3f7bd0" /><rect width="1.500" height="4" fill="#a9c8f2" />
                      </pattern>
                    </defs>
                    <text x="1" y="20" fontFamily="Liberation Serif" fontSize="27" fontWeight="700" fontStyle="italic" fill="url(#vrbo)">Vrbo</text>
                  </svg>
                </ChannelName>
                <strong>6%</strong>
              </Channel>
              <Channel><ChannelName>Listed on Both</ChannelName><strong>11%</strong></Channel>
            </Channels>
          </Card>
          <Card $apart={18}>
            <Head><h2>Rental Size</h2><Note>2.3 Bedrooms / 6.3 Guests on average</Note></Head>
            <SizeChart />
          </Card>
          <Card>
            <Head><h2>Rental Growth</h2><Note><p>-11% Quarterly Growth</p><p><InfoMark /> Jun '17 - Vrbo Data Added</p></Note></Head>
            <GrowthChart />
          </Card>
          <Card>
            <Head><h2>Amenities</h2></Head>
            <HBars height={311} left={93} right={760} top={20} bottom={269} first={32} step={25} base={283} ticks={percentTicks} rows={amenities} />
          </Card>
          <Ratings />
          <Activity />
          <Card>
            <Head><h2>Rental Settings</h2></Head>
            <SplitBar label="Cancellation Policy" top={16} parts={policy} />
            <HBars height={125} left={93} right={760} top={11} bottom={83} first={20} step={25} base={97} ticks={percentTicks} rows={amenities.slice(7)} />
          </Card>
          <Ratings />
          <Activity />
          <Card $bottom={18}>
            <Head><h2>Rental Settings</h2></Head>
            <SplitBar label="Cancellation Policy" top={16} parts={policy} />
            <SplitBar label="Minimum Stay" top={19} parts={stay} />
          </Card>
        </Content>
      </Main>
      <Rail aria-hidden="true">
        <Thumb /><RailGap $grow={818} /><Thumb /><RailGap $grow={820} /><Thumb /><RailGap $grow={819} /><Thumb /><RailGap $grow={639} /><Thumb />
      </Rail>
    </Page>
  );
}
